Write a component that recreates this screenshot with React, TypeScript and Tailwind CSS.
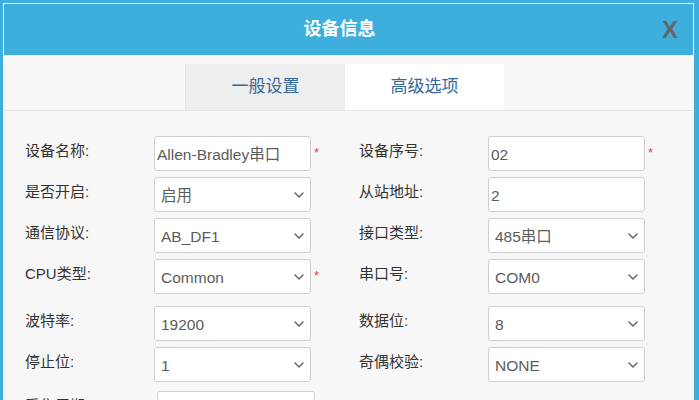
import React from "react";

const FONT = { fontFamily: '"Liberation Sans", Arial, "Noto Sans CJK SC", sans-serif' };

function Chevron() {
  return (
    <svg width="10" height="6" viewBox="0 0 10 6" className="absolute right-[6px] top-1/2 -translate-y-1/2">
      <path d="M1 1 L5 5 L9 1" fill="none" stroke="#666" strokeWidth="1.5" strokeLinecap="round" strokeLinejoin="round" />
    </svg>
  );
}

type Field = { label: string; value: string; select?: boolean; required?: boolean };

function FieldCell({ f }: { f: Field }) {
  return (
    <div className="flex w-[337px] items-start">
      <div className="w-[129px] pt-[5px] text-[15px] leading-[20px] text-[#333]">{f.label}</div>
      <div
        className={
          "relative flex h-[35px] w-[157px] items-center rounded-[3px] border border-[#cfcfcf] bg-white pt-[2px] text-[15.5px] text-[#5c5c5c] " +
          (f.select ? "pl-[6px]" : "pl-[2px]")
        }
      >
        {f.value}
        {f.select && <Chevron />}
      </div>
      {f.required && <span className="ml-[3px] mt-[10px] text-[13px] leading-none text-[#e0474c]">*</span>}
    </div>
  );
}

const rows: { h: string; left: Field; right?: Field }[] = [
  { h: "h-[41px]", left: { label: "设备名称:", value: "Allen-Bradley串口", required: true }, right: { label: "设备序号:", value: "02", required: true } },
  { h: "h-[41px]", left: { label: "是否开启:", value: "启用", select: true }, right: { label: "从站地址:", value: "2" } },
  { h: "h-[41px]", left: { label: "通信协议:", value: "AB_DF1", select: true }, right: { label: "接口类型:", value: "485串口", select: true } },
  { h: "h-[47px]", left: { label: "CPU类型:", value: "Common", select: true, required: true }, right: { label: "串口号:", value: "COM0", select: true } },
  { h: "h-[41px]", left: { label: "波特率:", value: "19200", select: true }, right: { label: "数据位:", value: "8", select: true } },
  { h: "h-[44px]", left: { label: "停止位:", value: "1", select: true }, right: { label: "奇偶校验:", value: "NONE", select: true } },
];

export default function App() {
  return (
    <div className="h-[400px] w-[699px] overflow-hidden bg-[#3eaedd] pl-[3px] pr-[5px] pt-[3px]" style={FONT}>
      <div className="flex h-[420px] flex-col border border-white bg-[#f7f7f7]">
        <div className="relative flex h-[51px] shrink-0 items-center justify-center bg-[#3eaedd]">
          <span className="mr-[18px] text-[18px] font-bold text-white">设备信息</span>
          <span className="absolute right-[15px] top-1/2 -translate-y-1/2 text-[24px] font-bold leading-none text-[#666]">X</span>
        </div>
        <div className="flex h-[56px] shrink-0 items-end border-b border-[#e4e4e4] pl-[181px]">
          <div className="flex h-[46px] w-[160px] items-center justify-center border-l border-[#e2e2e2] bg-[#eeeeee] text-[17px] text-[#376a9a]">
            一般设置
          </div>
          <div className="flex h-[46px] w-[159px] items-center justify-center bg-white text-[17px] text-[#376a9a]">
            高级选项
          </div>
        </div>
        <div className="flex flex-col pl-[21px] pt-[25px]">
          {rows.map((r, i) => (
            <div key={i} className={"flex shrink-0 " + r.h}>
              <FieldCell f={r.left} />
              {r.right && <FieldCell f={r.right} />}
            </div>
          ))}
          <div className="flex h-[41px] shrink-0">
            <div className="flex w-[337px] items-start">
              <div className="w-[132px] pt-[5px] text-[15px] leading-[20px] text-[#333]">采集周期:</div>
              <div className="h-[35px] w-[158px] rounded-[3px] border border-[#cfcfcf] bg-white"></div>
            </div>
          </div>
        </div>
      </div>
    </div>
  );
}
